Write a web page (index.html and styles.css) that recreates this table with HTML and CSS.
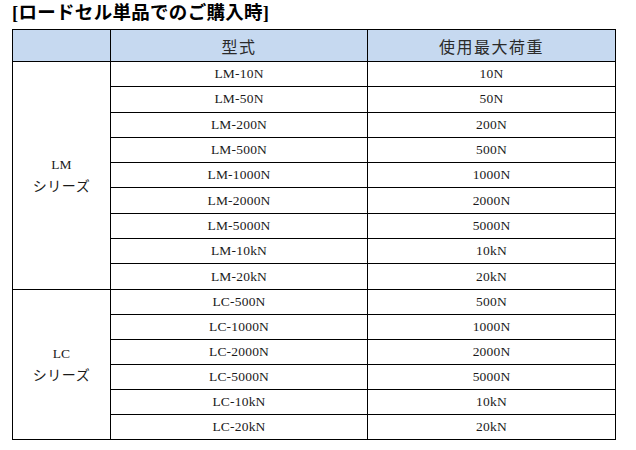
FILE: index.html
```html
<!DOCTYPE html>
<html lang="ja">
<head>
<meta charset="utf-8">
<link rel="stylesheet" href="styles.css">
</head>
<body>
<div class="page">
  <h2 class="title">[ロードセル単品でのご購入時]</h2>
  <table class="spec">
    <colgroup>
      <col class="c1"><col class="c2"><col class="c3">
    </colgroup>
    <thead>
      <tr class="head"><th></th><th>型式</th><th>使用最大荷重</th></tr>
    </thead>
    <tbody>
      <tr class="lm"><td class="series" rowspan="9">LM<br><span class="jp">シリーズ</span></td><td>LM-10N</td><td>10N</td></tr>
      <tr class="lm"><td>LM-50N</td><td>50N</td></tr>
      <tr class="lm"><td>LM-200N</td><td>200N</td></tr>
      <tr class="lm"><td>LM-500N</td><td>500N</td></tr>
      <tr class="lm"><td>LM-1000N</td><td>1000N</td></tr>
      <tr class="lm"><td>LM-2000N</td><td>2000N</td></tr>
      <tr class="lm"><td>LM-5000N</td><td>5000N</td></tr>
      <tr class="lm"><td>LM-10kN</td><td>10kN</td></tr>
      <tr class="lm"><td>LM-20kN</td><td>20kN</td></tr>
      <tr class="lc"><td class="series" rowspan="6">LC<br><span class="jp">シリーズ</span></td><td>LC-500N</td><td>500N</td></tr>
      <tr class="lc"><td>LC-1000N</td><td>1000N</td></tr>
      <tr class="lc"><td>LC-2000N</td><td>2000N</td></tr>
      <tr class="lc"><td>LC-5000N</td><td>5000N</td></tr>
      <tr class="lc"><td>LC-10kN</td><td>10kN</td></tr>
      <tr class="lc"><td>LC-20kN</td><td>20kN</td></tr>
    </tbody>
  </table>
</div>
</body>
</html>
```
FILE: styles.css
```css
html, body {
  margin: 0;
  padding: 0;
  background: #ffffff;
}
.page {
  padding: 0 0 0 12px;
  font-family: "Liberation Serif", "Noto Sans CJK JP", serif;
  color: #1a1a1a;
}
.title {
  margin: 0;
  height: 29px;
  line-height: 27px;
  font-size: 18.5px;
  font-weight: bold;
  color: #000000;
  letter-spacing: 0.3px;
}
.spec {
  border-collapse: collapse;
  table-layout: fixed;
  width: 603px;
}
.c1 { width: 98px; }
.c2 { width: 257px; }
.c3 { width: 248px; }
.spec th, .spec td {
  border: 1px solid #000000;
  padding: 0;
  text-align: center;
  vertical-align: middle;
}
.spec th {
  background: #c6d9f0;
  font-weight: normal;
  font-family: "Noto Sans CJK JP", sans-serif;
  font-size: 16px;
  color: #2a2a2a;
  height: 31px;
  letter-spacing: 1.5px;
}
.spec td {
  font-size: 13.5px;
  line-height: 18px;
  letter-spacing: 0.2px;
}
.lm td { height: 24.3px; }
.lc td { height: 24px; }
.spec td.series {
  line-height: 21px;
  font-size: 13.5px;
}
.jp {
  font-family: "Noto Sans CJK JP", sans-serif;
  font-size: 14px;
  letter-spacing: 0.5px;
}
```
